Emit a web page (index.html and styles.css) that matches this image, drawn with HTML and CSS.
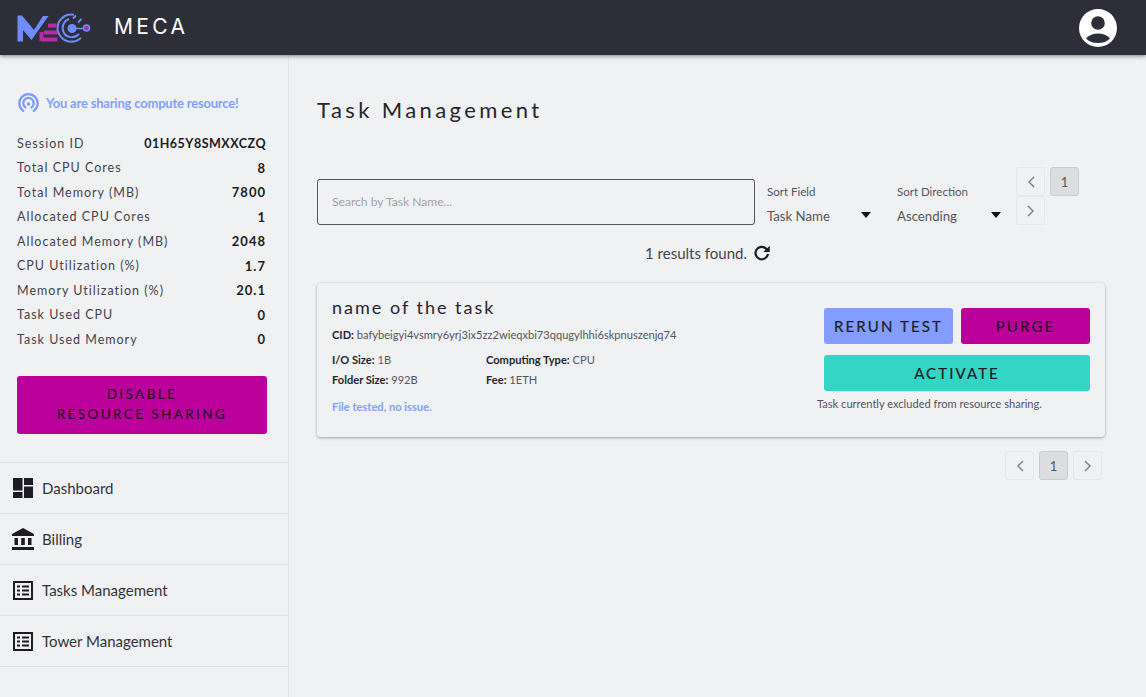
FILE: index.html
```html
<!DOCTYPE html>
<html lang="en">
<head>
    <meta charset="UTF-8">
    <meta name="viewport" content="width=device-width, initial-scale=1.0">
    <title>MECA</title>
    <link rel="stylesheet" href="styles.css">
</head>
<body>
    <header class="topbar">
        <div class="brand">
            <svg class="logo" viewBox="0 0 74 30" width="74" height="30">
                <path d="M0.5 2.500H5L17 17L26 3H31.500L14.500 27L6 17V28.500H0.5z" fill="#6f8cff"/>
                <path d="M24 26.500H40.500M27 19.500H40.500M31 12.500H39.500M24.500 19V28" fill="none" stroke="#b52ba8" stroke-width="4"/>
                <path d="M57 1.800A13.500 13.500 0 0 0 45 25C50 30 58 30 64 25" fill="none" stroke="#6f8cff" stroke-width="2"/>
                <path d="M52 6A9.500 9.500 0 0 0 46.500 19C49 25 57 26 62 21" fill="none" stroke="#6f8cff" stroke-width="2"/>
                <circle cx="55" cy="15.500" r="4.500" fill="#6f8cff"/>
                <path d="M58 15.500H68" stroke="#6f8cff" stroke-width="1.500"/>
                <path d="M56 5.500L59 2.500M61 9.500L64.500 6" stroke="#6f8cff" stroke-width="1.800"/>
                <circle cx="69.500" cy="15" r="3" fill="#b52ba8" stroke="#6f8cff" stroke-width="1.500"/>
            </svg>
            <span class="brand-name">MECA</span>
        </div>
        <svg class="avatar" viewBox="0 0 38 38" width="38" height="38">
            <circle cx="19" cy="19" r="19" fill="#fff"/>
            <circle cx="19" cy="14" r="6.800" fill="#2d2e38"/>
            <path d="M7 29.500C10 26 14 24.500 19 24.500S28 26 31 29.500C28 32.500 24 34 19 34S10 32.500 7 29.500z" fill="#2d2e38"/>
        </svg>
    </header>

    <div class="layout">
        <aside class="sidebar">
            <div class="sidebar-top">
                <div class="sharing">
                    <svg viewBox="0 0 24 24" width="21" height="21" fill="none" stroke="#7f9bff" stroke-width="2.600" stroke-linecap="round">
                        <path d="M6 20.500A10.500 10.500 0 1 1 18 20.500"/>
                        <path d="M8.500 16.500A6 6 0 1 1 15.500 16.500"/>
                        <circle cx="12" cy="12.500" r="2" fill="#7f9bff" stroke="none"/>
                    </svg>
                    <span>You are sharing compute resource!</span>
                </div>
                <div class="stats">
                    <div class="stat"><span>Session ID</span><b class="session">01H65Y8SMXXCZQ</b></div>
                    <div class="stat"><span>Total CPU Cores</span><b>8</b></div>
                    <div class="stat"><span>Total Memory (MB)</span><b>7800</b></div>
                    <div class="stat"><span>Allocated CPU Cores</span><b>1</b></div>
                    <div class="stat"><span>Allocated Memory (MB)</span><b>2048</b></div>
                    <div class="stat"><span>CPU Utilization (%)</span><b>1.7</b></div>
                    <div class="stat"><span>Memory Utilization (%)</span><b>20.1</b></div>
                    <div class="stat"><span>Task Used CPU</span><b>0</b></div>
                    <div class="stat"><span>Task Used Memory</span><b>0</b></div>
                </div>
                <button class="btn btn-purple btn-share">Disable<br>Resource Sharing</button>
            </div>
            <nav class="nav">
                <a class="nav-item">
                    <svg viewBox="0 0 24 24" width="24" height="24" fill="#1c1c22"><path d="M2 2h9.500v12.500H2zM13 2H22v7h-9zM13 10.500H22V22h-9zM2 16h9.500v6H2z"/></svg>
                    Dashboard
                </a>
                <a class="nav-item">
                    <svg viewBox="0 0 24 24" width="24" height="24" fill="#1c1c22"><path d="M12 1L1 7v2h22V7zM3.500 11v7h3.500v-7zM10.200 11v7h3.600v-7zM17 11v7h3.500v-7zM1 20h22v3H1z"/></svg>
                    Billing
                </a>
                <a class="nav-item">
                    <svg viewBox="0 0 24 24" width="24" height="24" fill="#1c1c22"><path fill-rule="evenodd" d="M2 3h20v19H2zM4 5v15h16V5zM6 7.500h3v2H6zM11 7.500h7v2h-7zM6 11.500h3v2H6zM11 11.500h7v2h-7zM6 15.500h3v2H6zM11 15.500h7v2h-7z"/></svg>
                    Tasks Management
                </a>
                <a class="nav-item">
                    <svg viewBox="0 0 24 24" width="24" height="24" fill="#1c1c22"><path fill-rule="evenodd" d="M2 3h20v19H2zM4 5v15h16V5zM6 7.500h3v2H6zM11 7.500h7v2h-7zM6 11.500h3v2H6zM11 11.500h7v2h-7zM6 15.500h3v2H6zM11 15.500h7v2h-7z"/></svg>
                    Tower Management
                </a>
            </nav>
        </aside>

        <main class="main">
            <h1>Task Management</h1>
            <div class="filters">
                <div class="search">Search by Task Name...</div>
                <div class="select select-field">
                    <label>Sort Field</label>
                    <div class="select-value">Task Name<i class="caret"></i></div>
                </div>
                <div class="select select-dir">
                    <label>Sort Direction</label>
                    <div class="select-value">Ascending<i class="caret"></i></div>
                </div>
                <div class="pager pager-wrap">
                    <span class="page-btn"><svg viewBox="0 0 10 14" width="10" height="14"><path d="M8 2L3 7L8 12"/></svg></span>
                    <span class="page-btn current">1</span>
                    <span class="page-btn"><svg viewBox="0 0 10 14" width="10" height="14"><path d="M2 2L7 7L2 12"/></svg></span>
                </div>
            </div>
            <div class="results">
                1 results found.
                <svg viewBox="0 0 24 24" width="22" height="22" fill="none"><path d="M18.500 13A6.800 6.800 0 1 1 16.500 7.200L19 9.500" stroke="#1c1c22" stroke-width="2.400"/><path d="M20.500 4V11H13.500z" fill="#1c1c22"/></svg>
            </div>
            <section class="card">
                <div class="card-info">
                    <h2>name of the task</h2>
                    <p class="cid"><b>CID:</b> bafybeigyi4vsmry6yrj3ix5zz2wieqxbi73qqugylhhi6skpnuszenjq74</p>
                    <div class="meta">
                        <p><b>I/O Size:</b> 1B</p>
                        <p><b>Computing Type:</b> CPU</p>
                        <p><b>Folder Size:</b> 992B</p>
                        <p><b>Fee:</b> 1ETH</p>
                    </div>
                    <p class="status">File tested, no issue.</p>
                </div>
                <div class="card-actions">
                    <div class="btn-grid">
                        <button class="btn btn-blue">Rerun Test</button>
                        <button class="btn btn-purple">Purge</button>
                        <button class="btn btn-teal">Activate</button>
                    </div>
                    <p class="note">Task currently excluded from resource sharing.</p>
                </div>
            </section>
            <div class="pager pager-bottom">
                <span class="page-btn"><svg viewBox="0 0 10 14" width="10" height="14"><path d="M8 2L3 7L8 12"/></svg></span>
                <span class="page-btn current">1</span>
                <span class="page-btn"><svg viewBox="0 0 10 14" width="10" height="14"><path d="M2 2L7 7L2 12"/></svg></span>
            </div>
        </main>
    </div>
</body>
</html>
```

FILE: styles.css
```css
* {
    box-sizing: border-box;
}
body {
    margin: 0;
    height: 697px;
    overflow: hidden;
    font-family: Lato, "Noto Sans", sans-serif;
    background-color: #f0f1f3;
    color: #26262c;
}
.topbar {
    position: relative;
    height: 55px;
    display: flex;
    align-items: center;
    justify-content: space-between;
    padding: 0 29px 0 17px;
    background-color: #2d2e38;
    box-shadow: 0 1px 4px rgba(0, 0, 0, 0.5);
}
.brand {
    display: flex;
    align-items: center;
    gap: 23px;
}
.brand-name {
    margin-top: -2px;
    font-family: Inter, sans-serif;
    font-size: 21px;
    letter-spacing: 3.3px;
    color: #fff;
}
.layout {
    display: flex;
    height: 642px;
}
.sidebar {
    width: 289px;
    flex-shrink: 0;
    border-right: 1px solid #e2e3e5;
}
.sidebar-top {
    padding: 37px 22px 28px 17px;
}
.sharing {
    display: flex;
    align-items: center;
    gap: 7px;
    height: 22px;
    margin-left: 1px;
    margin-bottom: 17px;
    font-size: 13px;
    letter-spacing: -0.2px;
    font-weight: 700;
    color: #82a0ff;
}
.stat {
    display: flex;
    justify-content: space-between;
    align-items: center;
    height: 24.5px;
    font-size: 12.5px;
    letter-spacing: 1px;
    color: #44444b;
}
.stat b {
    font-size: 13px;
    font-weight: 700;
    color: #1c1c22;
}
.stat .session {
    font-size: 12.5px;
    letter-spacing: 0.5px;
}
.btn {
    padding: 0 0 1px;
    border: none;
    border-radius: 3px;
    font-family: Lato, sans-serif;
    font-size: 15px;
    letter-spacing: 2.1px;
    text-transform: uppercase;
    -webkit-text-stroke: 0.2px currentColor;
    color: #1c1c22;
    cursor: pointer;
}
.btn-share {
    width: 250px;
    height: 58px;
    margin-top: 24px;
    font-size: 13.5px;
    line-height: 20px;
    letter-spacing: 2.4px;
}
.btn-purple {
    background-color: #bc009c;
    color: #2b0a2c;
}
.btn-blue {
    background-color: #829dff;
}
.btn-teal {
    grid-column: 1 / 3;
    background-color: #35d5c6;
}
.nav {
    border-top: 1px solid #e0e1e3;
}
.nav-item {
    display: flex;
    align-items: center;
    gap: 7px;
    height: 51px;
    padding-left: 11px;
    border-bottom: 1px solid #e0e1e3;
    font-size: 15px;
    color: #33333a;
}
.main {
    flex: 1;
    padding: 40px 41px 0 28px;
}
h1 {
    margin: 0;
    font-size: 22px;
    line-height: 29px;
    font-weight: 400;
    letter-spacing: 3.4px;
    color: #26262c;
}
.filters {
    display: flex;
    align-items: flex-start;
    height: 60px;
    margin-top: 43px;
}
.search {
    width: 438px;
    height: 46px;
    margin-top: 12px;
    padding: 0 14px;
    line-height: 44px;
    border: 1px solid #55555c;
    border-radius: 3px;
    font-size: 12.1px;
    color: #a3a4a8;
}
.select {
    margin-top: 17px;
    color: #55555c;
}
.select label {
    display: block;
    font-size: 11.5px;
    line-height: 15px;
}
.select-value {
    display: flex;
    justify-content: space-between;
    align-items: center;
    margin-top: 8px;
    font-size: 13.2px;
    line-height: 18px;
}
.select-field {
    width: 104px;
    margin-left: 12px;
}
.select-dir {
    width: 104px;
    margin-left: 26px;
}
.caret {
    width: 0;
    height: 0;
    margin-bottom: 3px;
    border-left: 5.5px solid transparent;
    border-right: 5.5px solid transparent;
    border-top: 6px solid #111;
}
.pager {
    display: flex;
    flex-wrap: wrap;
    gap: 5px;
}
.pager-wrap {
    width: 70px;
    margin-left: 15px;
    row-gap: 0;
}
.page-btn {
    display: flex;
    align-items: center;
    justify-content: center;
    width: 29px;
    height: 29px;
    border: 1px solid #e6e7e9;
    border-radius: 3px;
    font-size: 13px;
    color: #55555c;
}
.page-btn svg path {
    fill: none;
    stroke: #85868b;
    stroke-width: 1.5;
}
.page-btn.current {
    background-color: #dcdde0;
    border-color: #cbccd0;
}
.results {
    display: flex;
    align-items: center;
    justify-content: center;
    gap: 4px;
    height: 24px;
    margin-top: 14px;
    margin-right: 4px;
    font-size: 15px;
    color: #44444b;
}
.card {
    display: flex;
    justify-content: space-between;
    width: 788px;
    height: 154px;
    margin-top: 18px;
    padding: 13px 15px 0 15px;
    border-radius: 4px;
    box-shadow: 0 1px 3px rgba(0, 0, 0, 0.35);
}
h2 {
    margin: 0;
    font-size: 18px;
    line-height: 23px;
    font-weight: 400;
    letter-spacing: 2px;
}
.card-info p {
    margin: 0;
    font-size: 11.1px;
    line-height: 20px;
    color: #55555c;
}
.card-info b {
    font-weight: 700;
    color: #26262c;
}
.card-info .cid {
    margin-top: 6px;
}
.meta {
    display: grid;
    grid-template-columns: 154px 200px;
    margin-top: 5px;
}
.card-info .status {
    margin-top: 7px;
    font-weight: 700;
    color: #82a0ff;
}
.card-actions {
    width: 266px;
    padding-top: 12px;
}
.btn-grid {
    display: grid;
    grid-template-columns: 129px 129px;
    grid-auto-rows: 36px;
    gap: 11px 8px;
}
.note {
    margin: 5px 0 0 -7px;
    font-size: 11.1px;
    line-height: 16px;
    white-space: nowrap;
    color: #55555c;
}
.pager-bottom {
    width: 97px;
    margin: 14px 0 0 688px;
}
```
